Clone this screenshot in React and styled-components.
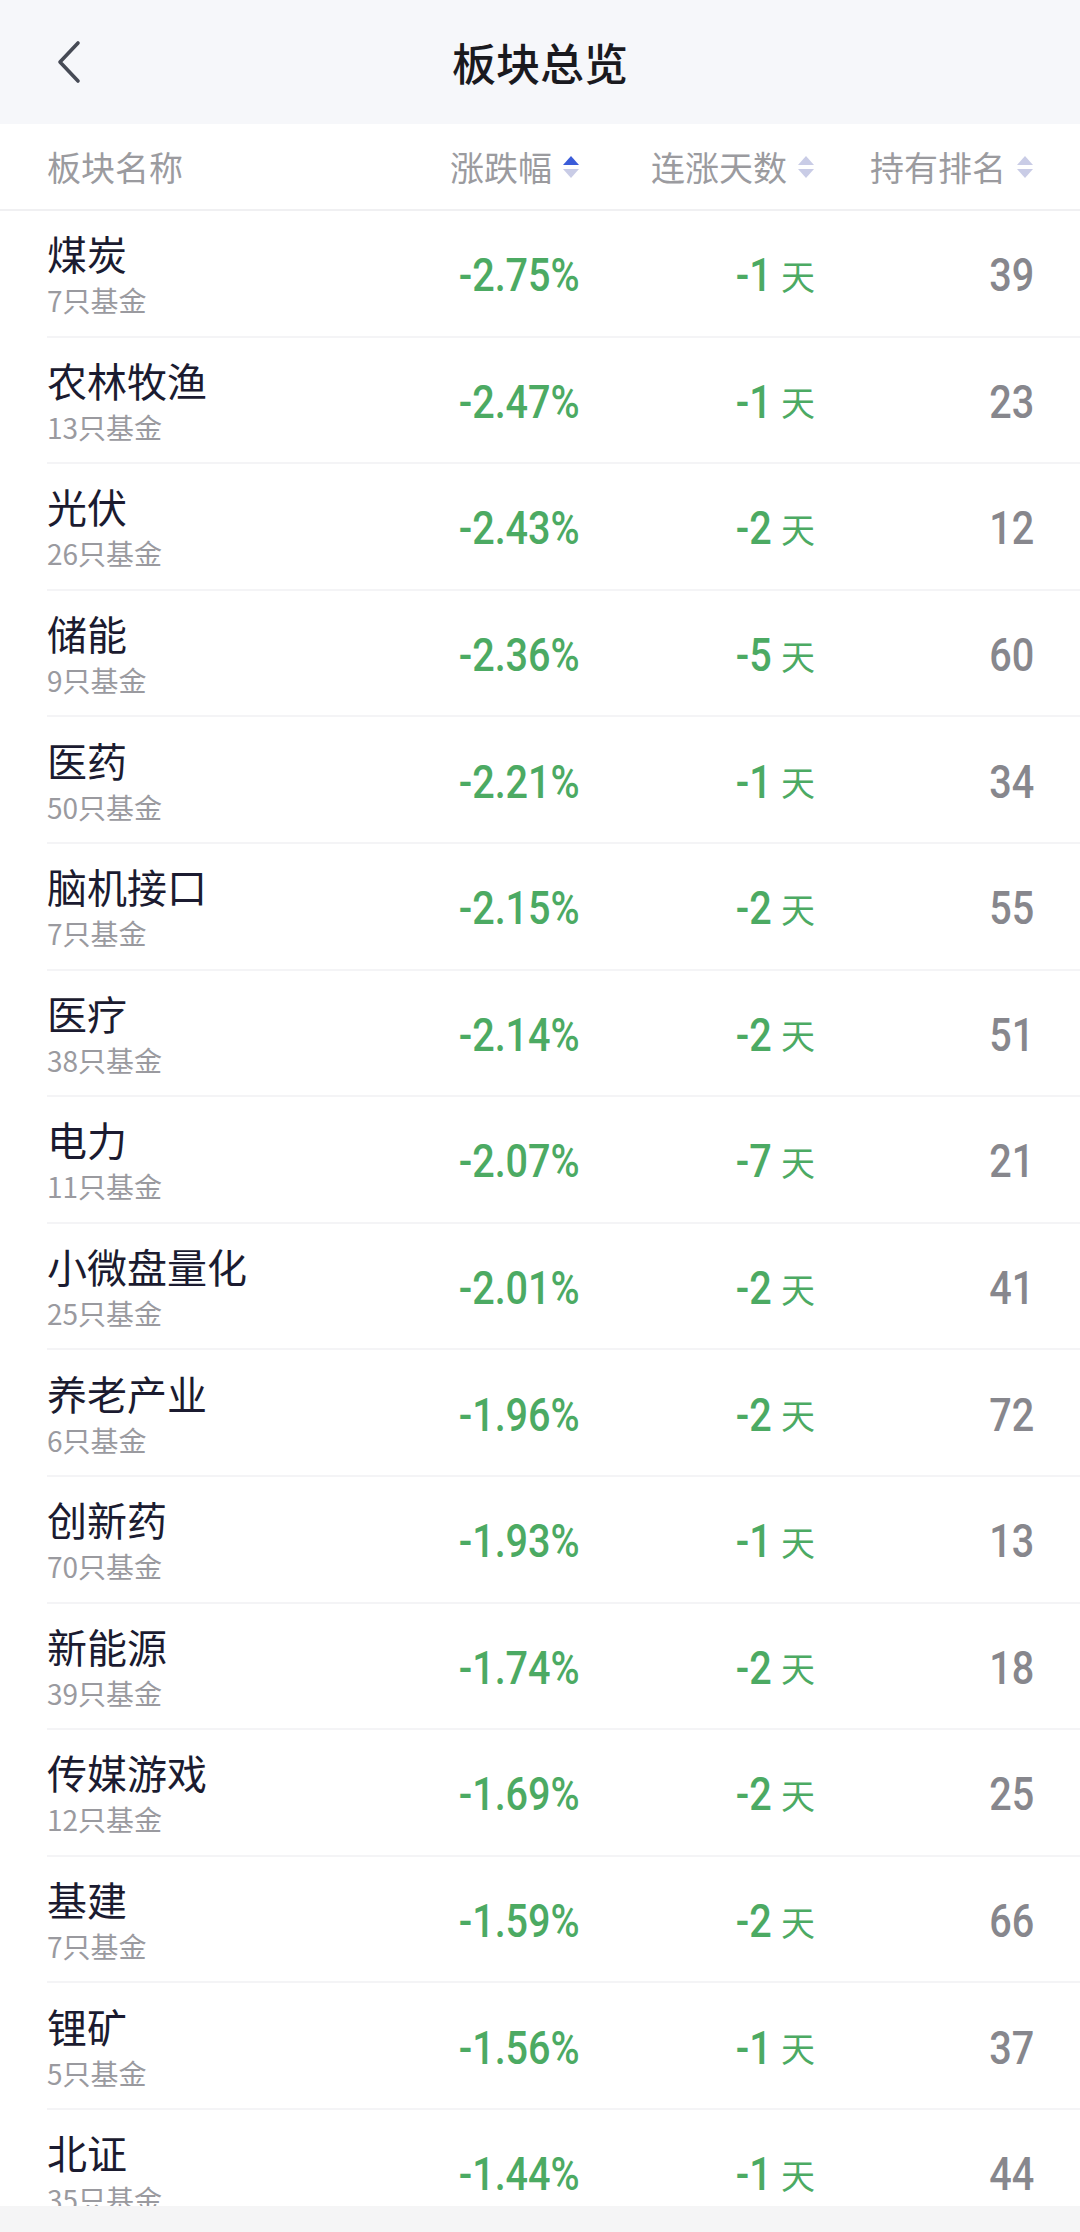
import React from "react";
import styled, { createGlobalStyle } from "styled-components";

const GlobalStyle = createGlobalStyle`
  html, body {
    margin: 0;
    padding: 0;
    background: #ffffff;
  }
  body {
    font-family: "Noto Sans CJK SC", "Noto Sans", sans-serif;
  }
`;

const rows = [
  { name: "煤炭", count: 7, change: "-2.75%", days: -1, rank: 39 },
  { name: "农林牧渔", count: 13, change: "-2.47%", days: -1, rank: 23 },
  { name: "光伏", count: 26, change: "-2.43%", days: -2, rank: 12 },
  { name: "储能", count: 9, change: "-2.36%", days: -5, rank: 60 },
  { name: "医药", count: 50, change: "-2.21%", days: -1, rank: 34 },
  { name: "脑机接口", count: 7, change: "-2.15%", days: -2, rank: 55 },
  { name: "医疗", count: 38, change: "-2.14%", days: -2, rank: 51 },
  { name: "电力", count: 11, change: "-2.07%", days: -7, rank: 21 },
  { name: "小微盘量化", count: 25, change: "-2.01%", days: -2, rank: 41 },
  { name: "养老产业", count: 6, change: "-1.96%", days: -2, rank: 72 },
  { name: "创新药", count: 70, change: "-1.93%", days: -1, rank: 13 },
  { name: "新能源", count: 39, change: "-1.74%", days: -2, rank: 18 },
  { name: "传媒游戏", count: 12, change: "-1.69%", days: -2, rank: 25 },
  { name: "基建", count: 7, change: "-1.59%", days: -2, rank: 66 },
  { name: "锂矿", count: 5, change: "-1.56%", days: -1, rank: 37 },
  { name: "北证", count: 35, change: "-1.44%", days: -1, rank: 44 },
];

const Page = styled.div`
  width: 1080px;
  height: 2232px;
  overflow: hidden;
  position: relative;
  background: #ffffff;
`;

const NavBar = styled.header`
  height: 124px;
  background: #f6f7fa;
  display: grid;
  grid-template-columns: 120px 1fr 120px;
  align-items: center;
`;

const BackButton = styled.div`
  display: flex;
  align-items: center;
  padding-left: 54px;
  height: 100%;
`;

const Title = styled.h1`
  margin: 0;
  text-align: center;
  font-size: 44px;
  font-weight: 500;
  color: #1a1a1f;
`;

const columns = "1fr 250px 235px 219px";

const HeaderRow = styled.div`
  display: grid;
  grid-template-columns: ${columns};
  align-items: center;
  height: 87px;
  padding: 0 46px 0 47px;
  border-bottom: 2px solid #f0f0f2;
  box-sizing: border-box;
`;

const HeaderCell = styled.div`
  display: flex;
  align-items: center;
  justify-content: ${(p) => (p.$right ? "flex-end" : "flex-start")};
  gap: 10px;
  font-size: 34px;
  color: #9b9b9f;
`;

const Row = styled.div`
  display: grid;
  grid-template-columns: ${columns};
  align-items: center;
  height: 126.6px;
  box-sizing: border-box;
  padding-right: 46px;
  margin-left: 47px;
  border-bottom: 2px solid #f4f4f6;
`;

const NameCell = styled.div`
  display: flex;
  flex-direction: column;
`;

const Name = styled.div`
  font-size: 40px;
  line-height: 54px;
  color: #1b1b30;
`;

const Sub = styled.div`
  font-size: 28px;
  line-height: 40px;
  color: #9a9a9f;
`;

const Num = styled.span`
  display: inline-block;
  font-family: Roboto, "Liberation Sans", sans-serif;
  font-size: 46px;
  font-weight: 500;
  transform: scaleX(0.86);
  transform-origin: right center;
  color: ${(p) => p.$color};
`;

const ValueCell = styled.div`
  display: flex;
  align-items: center;
  justify-content: flex-end;
  gap: 9px;
  padding-top: 4px;
`;

const DayUnit = styled.span`
  font-size: 34px;
  color: #4caa63;
`;

const BottomBar = styled.div`
  position: absolute;
  left: 0;
  right: 0;
  bottom: 0;
  height: 26px;
  background: #f5f5f6;
`;

const SortIcon = ({ active }) => (
  <svg width="18" height="24" viewBox="0 0 18 24">
    <polygon points="9,1 17,10 1,10" fill={active ? "#3b5cd9" : "#c9cce6"} />
    <polygon points="1,14 17,14 9,23" fill="#c9cce6" />
  </svg>
);

const App = () => {
  return (
    <Page>
      <GlobalStyle />
      <NavBar>
        <BackButton>
          <svg width="30" height="44" viewBox="0 0 30 44">
            <polyline
              points="24,3 6,22 24,41"
              fill="none"
              stroke="#464a55"
              strokeWidth="3.6"
              strokeLinecap="round"
              strokeLinejoin="round"
            />
          </svg>
        </BackButton>
        <Title>板块总览</Title>
        <div />
      </NavBar>
      <HeaderRow>
        <HeaderCell>板块名称</HeaderCell>
        <HeaderCell $right>
          涨跌幅
          <SortIcon active />
        </HeaderCell>
        <HeaderCell $right>
          连涨天数
          <SortIcon />
        </HeaderCell>
        <HeaderCell $right>
          持有排名
          <SortIcon />
        </HeaderCell>
      </HeaderRow>
      {rows.map((r) => (
        <Row key={r.name}>
          <NameCell>
            <Name>{r.name}</Name>
            <Sub>{r.count}只基金</Sub>
          </NameCell>
          <ValueCell>
            <Num $color="#4caa63">{r.change}</Num>
          </ValueCell>
          <ValueCell>
            <Num $color="#4caa63">{r.days}</Num>
            <DayUnit>天</DayUnit>
          </ValueCell>
          <ValueCell>
            <Num $color="#87878d">{r.rank}</Num>
          </ValueCell>
        </Row>
      ))}
      <BottomBar />
    </Page>
  );
};

export default App;
